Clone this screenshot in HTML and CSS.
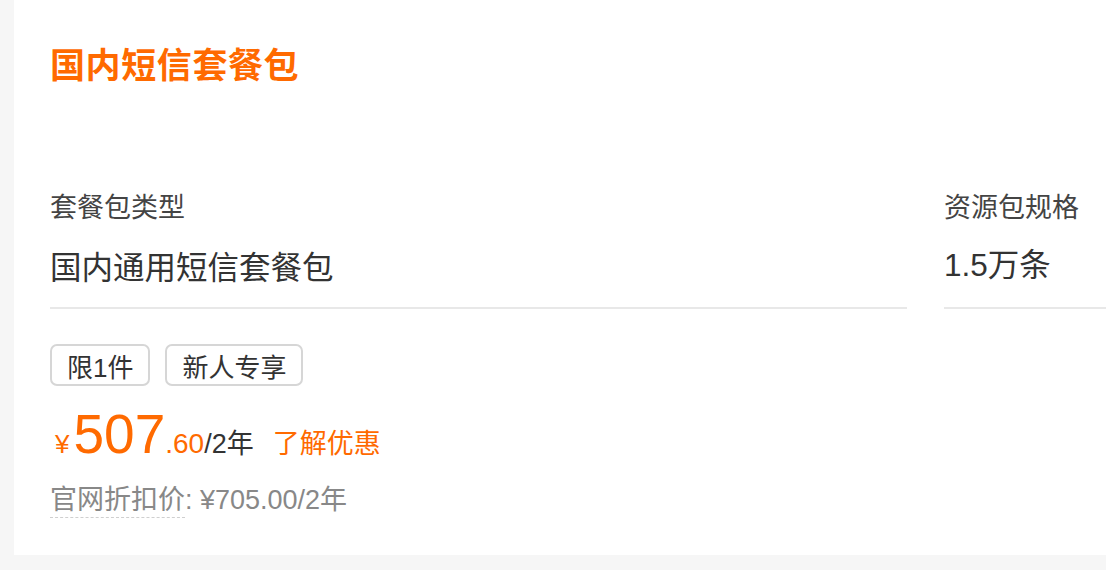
FILE: index.html
```html
<!DOCTYPE html>
<html lang="zh-CN">
<head>
<meta charset="utf-8">
<title>国内短信套餐包</title>
<link rel="stylesheet" href="styles.css">
</head>
<body>
<div class="page">
  <div class="card">
    <h1 class="title">国内短信套餐包</h1>
    <div class="fields">
      <div class="field field-type">
        <div class="label">套餐包类型</div>
        <div class="value">国内通用短信套餐包</div>
      </div>
      <div class="field field-spec">
        <div class="label">资源包规格</div>
        <div class="value num">1.5万条</div>
      </div>
    </div>
    <div class="tags">
      <span class="tag">限1件</span>
      <span class="tag">新人专享</span>
    </div>
    <div class="price-row">
      <span class="yen">¥</span><span class="int">507</span><span class="dec">.60</span><span class="unit">/2年</span>
      <a class="promo">了解优惠</a>
    </div>
    <div class="orig">
      <span class="orig-label">官网折扣价</span><span>: ¥705.00/2年</span>
    </div>
  </div>
</div>
</body>
</html>
```

FILE: styles.css
```css
html, body {
  margin: 0;
  padding: 0;
}
body {
  background: #f6f6f6;
  font-family: "Liberation Sans", "Noto Sans CJK SC", sans-serif;
  color: #333;
  width: 1106px;
  height: 570px;
  overflow: hidden;
}
.page {
  padding-left: 14px;
}
.card {
  background: #ffffff;
  height: 555px;
  padding: 39px 0 0 36px;
  box-sizing: border-box;
  overflow: hidden;
}
.title {
  margin: 0;
  font-family: "Noto Sans CJK SC", sans-serif;
  font-size: 35px;
  line-height: 48px;
  font-weight: 700;
  color: #ff6a00;
  letter-spacing: 0.6px;
}
.fields {
  display: flex;
  gap: 37px;
  margin-top: 101px;
  width: 1200px;
}
.field {
  border-bottom: 2px solid #e8e8e8;
  padding-bottom: 20px;
  flex: none;
}
.field-type { width: 857px; }
.field-spec { width: 300px; }
.label {
  font-family: "Noto Sans CJK SC", sans-serif;
  font-size: 27px;
  line-height: 36px;
  color: #444;
}
.value {
  margin-top: 19px;
  font-family: "Noto Sans CJK SC", sans-serif;
  font-size: 31.5px;
  line-height: 44px;
  color: #333;
}
.value.num {
  font-family: "Liberation Sans", "Noto Sans CJK SC", sans-serif;
}
.tags {
  display: flex;
  gap: 15px;
  margin-top: 35px;
}
.tag {
  display: inline-flex;
  align-items: center;
  height: 42px;
  box-sizing: border-box;
  padding: 0 15px;
  border: 2px solid #d6d6d6;
  border-radius: 7px;
  font-size: 26px;
  color: #333;
}
.price-row {
  display: flex;
  align-items: baseline;
  margin-top: 19px;
  height: 58px;
  line-height: 58px;
}
.yen {
  font-family: "Liberation Sans", sans-serif;
  font-size: 26px;
  color: #ff6a00;
  margin-left: 5px;
  margin-right: 4px;
}
.int {
  font-size: 55px;
  color: #ff6a00;
}
.dec {
  font-size: 28px;
  color: #ff6a00;
  margin-left: 0;
}
.unit {
  font-size: 27px;
  color: #333;
}
.promo {
  font-family: "Noto Sans CJK SC", sans-serif;
  font-size: 27px;
  color: #ff6a00;
  margin-left: 19px;
}
.orig {
  margin-top: 19px;
  font-size: 27px;
  line-height: 36px;
  color: #888;
}
.orig-label {
  display: inline-block;
  line-height: 33px;
  border-bottom: 1px dashed #cfcfcf;
}
```
